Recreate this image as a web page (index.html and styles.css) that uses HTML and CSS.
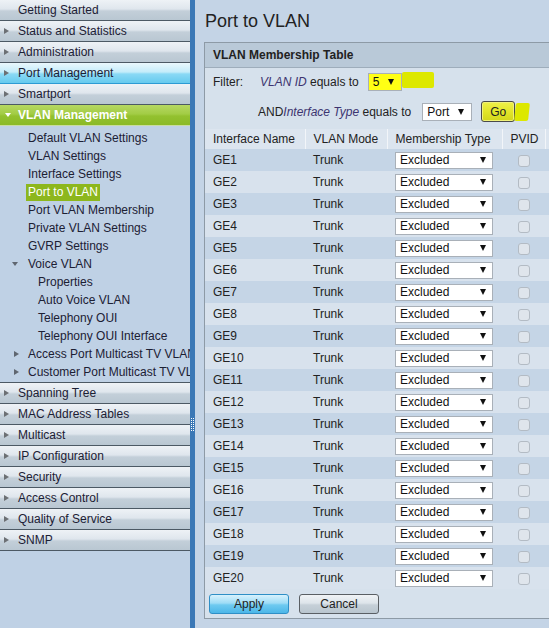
FILE: index.html
```html
<!DOCTYPE html>
<html lang="en">

<head>
    <meta charset="UTF-8">
    <meta name="viewport" content="width=device-width, initial-scale=1.0">
    <title>Port to VLAN</title>
    <link rel="stylesheet" href="styles.css">
</head>

<body>

    <div class="sidebar">
        <div class="nav-item">Getting Started</div>
        <div class="nav-item closed">Status and Statistics</div>
        <div class="nav-item closed">Administration</div>
        <div class="nav-item closed hovered">Port Management</div>
        <div class="nav-item closed">Smartport</div>
        <div class="nav-item open">VLAN Management</div>
        <ul class="sub-menu">
            <li>Default VLAN Settings</li>
            <li>VLAN Settings</li>
            <li>Interface Settings</li>
            <li><span class="current">Port to VLAN</span></li>
            <li>Port VLAN Membership</li>
            <li>Private VLAN Settings</li>
            <li>GVRP Settings</li>
            <li class="group open">Voice VLAN</li>
            <li class="level2">Properties</li>
            <li class="level2">Auto Voice VLAN</li>
            <li class="level2">Telephony OUI</li>
            <li class="level2">Telephony OUI Interface</li>
            <li class="group closed">Access Port Multicast TV VLAN</li>
            <li class="group closed">Customer Port Multicast TV VLAN</li>
        </ul>
        <div class="nav-item closed after-sub">Spanning Tree</div>
        <div class="nav-item closed">MAC Address Tables</div>
        <div class="nav-item closed">Multicast</div>
        <div class="nav-item closed">IP Configuration</div>
        <div class="nav-item closed">Security</div>
        <div class="nav-item closed">Access Control</div>
        <div class="nav-item closed">Quality of Service</div>
        <div class="nav-item closed">SNMP</div>
    </div>

    <div class="splitter"><span class="grip"></span></div>

    <div class="content">
        <h1 class="page-title">Port to VLAN</h1>

        <div class="panel">
            <div class="panel-head">VLAN Membership Table</div>

            <div class="filter">
                <div class="filter-row">
                    <span class="filter-label">Filter:</span>
                    <em>VLAN ID</em>&nbsp;equals to
                    <span class="select select-vlan">5<i class="caret"></i></span>
                    <span class="mark mark-wide"></span>
                </div>
                <div class="filter-row second">
                    <span class="filter-indent"></span>
                    AND<em>Interface Type</em>&nbsp;equals to
                    <span class="select select-type">Port<i class="caret"></i></span>
                    <button class="go-btn">Go</button>
                    <span class="mark mark-thin"></span>
                </div>
            </div>

            <table class="member-table">
                <colgroup>
                    <col style="width: 100px">
                    <col style="width: 82px">
                    <col style="width: 115px">
                    <col style="width: 43px">
                    <col>
                </colgroup>
                <thead>
                    <tr>
                        <th>Interface Name</th>
                        <th>VLAN Mode</th>
                        <th>Membership Type</th>
                        <th>PVID</th>
                        <th></th>
                    </tr>
                </thead>
                <tbody>
                    <tr><td>GE1</td><td>Trunk</td><td><span class="select select-row">Excluded<i class="caret"></i></span></td><td class="pvid"><input type="checkbox" disabled></td><td></td></tr>
                    <tr><td>GE2</td><td>Trunk</td><td><span class="select select-row">Excluded<i class="caret"></i></span></td><td class="pvid"><input type="checkbox" disabled></td><td></td></tr>
                    <tr><td>GE3</td><td>Trunk</td><td><span class="select select-row">Excluded<i class="caret"></i></span></td><td class="pvid"><input type="checkbox" disabled></td><td></td></tr>
                    <tr><td>GE4</td><td>Trunk</td><td><span class="select select-row">Excluded<i class="caret"></i></span></td><td class="pvid"><input type="checkbox" disabled></td><td></td></tr>
                    <tr><td>GE5</td><td>Trunk</td><td><span class="select select-row">Excluded<i class="caret"></i></span></td><td class="pvid"><input type="checkbox" disabled></td><td></td></tr>
                    <tr><td>GE6</td><td>Trunk</td><td><span class="select select-row">Excluded<i class="caret"></i></span></td><td class="pvid"><input type="checkbox" disabled></td><td></td></tr>
                    <tr><td>GE7</td><td>Trunk</td><td><span class="select select-row">Excluded<i class="caret"></i></span></td><td class="pvid"><input type="checkbox" disabled></td><td></td></tr>
                    <tr><td>GE8</td><td>Trunk</td><td><span class="select select-row">Excluded<i class="caret"></i></span></td><td class="pvid"><input type="checkbox" disabled></td><td></td></tr>
                    <tr><td>GE9</td><td>Trunk</td><td><span class="select select-row">Excluded<i class="caret"></i></span></td><td class="pvid"><input type="checkbox" disabled></td><td></td></tr>
                    <tr><td>GE10</td><td>Trunk</td><td><span class="select select-row">Excluded<i class="caret"></i></span></td><td class="pvid"><input type="checkbox" disabled></td><td></td></tr>
                    <tr><td>GE11</td><td>Trunk</td><td><span class="select select-row">Excluded<i class="caret"></i></span></td><td class="pvid"><input type="checkbox" disabled></td><td></td></tr>
                    <tr><td>GE12</td><td>Trunk</td><td><span class="select select-row">Excluded<i class="caret"></i></span></td><td class="pvid"><input type="checkbox" disabled></td><td></td></tr>
                    <tr><td>GE13</td><td>Trunk</td><td><span class="select select-row">Excluded<i class="caret"></i></span></td><td class="pvid"><input type="checkbox" disabled></td><td></td></tr>
                    <tr><td>GE14</td><td>Trunk</td><td><span class="select select-row">Excluded<i class="caret"></i></span></td><td class="pvid"><input type="checkbox" disabled></td><td></td></tr>
                    <tr><td>GE15</td><td>Trunk</td><td><span class="select select-row">Excluded<i class="caret"></i></span></td><td class="pvid"><input type="checkbox" disabled></td><td></td></tr>
                    <tr><td>GE16</td><td>Trunk</td><td><span class="select select-row">Excluded<i class="caret"></i></span></td><td class="pvid"><input type="checkbox" disabled></td><td></td></tr>
                    <tr><td>GE17</td><td>Trunk</td><td><span class="select select-row">Excluded<i class="caret"></i></span></td><td class="pvid"><input type="checkbox" disabled></td><td></td></tr>
                    <tr><td>GE18</td><td>Trunk</td><td><span class="select select-row">Excluded<i class="caret"></i></span></td><td class="pvid"><input type="checkbox" disabled></td><td></td></tr>
                    <tr><td>GE19</td><td>Trunk</td><td><span class="select select-row">Excluded<i class="caret"></i></span></td><td class="pvid"><input type="checkbox" disabled></td><td></td></tr>
                    <tr><td>GE20</td><td>Trunk</td><td><span class="select select-row">Excluded<i class="caret"></i></span></td><td class="pvid"><input type="checkbox" disabled></td><td></td></tr>
                </tbody>
            </table>

            <div class="actions">
                <button class="btn btn-apply">Apply</button>
                <button class="btn btn-cancel">Cancel</button>
            </div>
        </div>
    </div>

</body>

</html>
```

FILE: styles.css
```css
* {
    margin: 0;
    padding: 0;
    box-sizing: border-box;
}

body {
    font-family: "Liberation Sans", Arial, sans-serif;
    font-size: 12px;
    color: #222;
    display: flex;
    width: 549px;
    height: 628px;
    overflow: hidden;
    background-color: #c4d4e6;
}

/* left navigation */
.sidebar {
    width: 190px;
    flex: none;
    background-color: #bfd1e5;
    overflow: hidden;
}

.nav-item {
    height: 21px;
    line-height: 21px;
    padding-left: 18px;
    color: #1c2034;
    white-space: nowrap;
    background: linear-gradient(to bottom, #eef2f6 0%, #dfe6ed 45%, #c3cfd9 55%, #b9c7d2 100%);
    border-bottom: 1px solid #4c5964;
}

.nav-item.closed {
    padding-left: 4px;
}

.nav-item.closed::before {
    content: "";
    display: inline-block;
    vertical-align: middle;
    margin: -2px 9px 0 0;
    border-left: 5px solid #6c7074;
    border-top: 3px solid transparent;
    border-bottom: 3px solid transparent;
}

.nav-item.hovered {
    background: linear-gradient(to bottom, #eaf8fd 0%, #c4ecfa 45%, #8ad9f5 55%, #66caee 100%);
    border-bottom-color: #2d9bd3;
}

.nav-item.open {
    padding-left: 5px;
    color: #fff;
    font-weight: bold;
    background: linear-gradient(to bottom, #b6d862 0%, #a2cc45 45%, #93c12f 55%, #8bba27 100%);
    border-bottom: 1px solid #c9dca0;
}

.nav-item.open::before {
    content: "";
    display: inline-block;
    vertical-align: middle;
    margin: -1px 7px 0 0;
    border-top: 4px solid #fff;
    border-left: 3px solid transparent;
    border-right: 3px solid transparent;
}

.nav-item.after-sub {
    height: 22px;
    border-top: 1px solid #4c5964;
}

.sub-menu {
    list-style: none;
    padding: 3px 0 1px;
}

.sub-menu li {
    height: 18px;
    line-height: 18px;
    padding-left: 28px;
    color: #1c2034;
    white-space: nowrap;
}

.sub-menu li.level2 {
    padding-left: 38px;
}

.sub-menu li.group.open {
    padding-left: 12px;
}

.sub-menu li.group.open::before {
    content: "";
    display: inline-block;
    vertical-align: middle;
    margin: -1px 10px 0 0;
    border-top: 4px solid #5f6670;
    border-left: 3px solid transparent;
    border-right: 3px solid transparent;
}

.sub-menu li.group.closed {
    padding-left: 14px;
}

.sub-menu li.group.closed::before {
    content: "";
    display: inline-block;
    vertical-align: middle;
    margin: -2px 9px 0 0;
    border-left: 5px solid #5f6670;
    border-top: 3px solid transparent;
    border-bottom: 3px solid transparent;
}

.sub-menu .current {
    display: inline-block;
    line-height: 17px;
    margin-left: -2px;
    padding: 0 2px;
    color: #fff;
    background-color: #8db71d;
}

/* blue bar between menu and page */
.splitter {
    width: 5px;
    flex: none;
    background-color: #3b78b6;
    position: relative;
}

.grip {
    position: absolute;
    top: 418px;
    left: 1px;
    width: 3px;
    height: 13px;
    border-left: 1px dotted #fff;
    border-right: 1px dotted #fff;
}

/* page area */
.content {
    flex: 1;
    min-width: 0;
    overflow: hidden;
    padding-left: 9px;
}

.page-title {
    height: 42px;
    line-height: 42px;
    padding-left: 1px;
    font-size: 18px;
    font-weight: normal;
    color: #222;
}

.panel {
    width: 360px;
    border: 1px solid #8d9aa6;
    border-right: none;
    background-color: #d6e1ec;
}

.panel-head {
    height: 25px;
    line-height: 24px;
    padding-left: 8px;
    font-weight: bold;
    color: #222;
    background-color: #b9c9d8;
    border-bottom: 1px solid #9eadbb;
}

.filter {
    padding: 3px 0 6px 8px;
}

.filter-row {
    display: flex;
    align-items: center;
    height: 22px;
    white-space: nowrap;
}

.filter-row.second {
    height: 23px;
    margin-top: 7px;
}

.filter-label {
    width: 47px;
}

.filter-indent {
    width: 45px;
}

.filter em {
    color: #3c3470;
}

.select {
    display: inline-flex;
    align-items: center;
    justify-content: space-between;
    height: 18px;
    padding: 0 7px 0 4px;
    background-color: #fff;
    border: 1px solid #a9b0b8;
    color: #111;
}

.caret {
    display: inline-block;
    border-top: 6px solid #111;
    border-left: 3px solid transparent;
    border-right: 3px solid transparent;
}

.select-vlan {
    width: 34px;
    margin-left: 9px;
    background-color: #ffff14;
}

.select-type {
    width: 50px;
    margin-left: 11px;
}

.select-row {
    width: 98px;
    padding-right: 6px;
    height: 17px;
}

.go-btn {
    width: 34px;
    height: 21px;
    margin-left: 9px;
    font-family: inherit;
    font-size: 12px;
    color: #222;
    border: 1px solid #4a4a4a;
    border-radius: 3px;
    background: linear-gradient(to bottom, #eef04a 0%, #e2e62a 50%, #d2d61c 100%);
    box-shadow: inset 0 0 0 1px #f0f27a;
}

/* yellow marker strokes from the screenshot */
.mark {
    display: inline-block;
    background-color: #dde800;
    border-radius: 2px;
}

.mark-wide {
    width: 32px;
    height: 16px;
    margin-top: -4px;
}

.mark-thin {
    width: 14px;
    height: 18px;
    transform: skewX(-6deg);
}

.member-table {
    width: 100%;
    border-collapse: collapse;
    table-layout: fixed;
}

.member-table th {
    height: 20px;
    padding: 0 8px;
    text-align: left;
    font-weight: normal;
    color: #222;
    white-space: nowrap;
    background-color: #dce5ef;
    border-right: 1px solid #f2f5f9;
}

.member-table td {
    height: 22px;
    padding: 0 8px;
    white-space: nowrap;
}

.member-table tbody tr:nth-child(odd) {
    background-color: #c5d5e6;
}

.member-table tbody tr:nth-child(even) {
    background-color: #d8e2ed;
}

.member-table td.pvid {
    text-align: center;
    padding: 0;
}

.pvid input {
    appearance: none;
    display: inline-block;
    vertical-align: middle;
    width: 12px;
    height: 12px;
    border: 1px solid #b3bbc4;
    border-radius: 3px;
    background-color: #dfe5ec;
}

.actions {
    display: flex;
    gap: 10px;
    padding: 5px 0 4px 4px;
}

.btn {
    width: 80px;
    height: 20px;
    font-family: inherit;
    font-size: 12px;
    color: #222;
    border-radius: 3px;
    cursor: pointer;
}

.btn-apply {
    border: 1px solid #2f8fc6;
    background: linear-gradient(to bottom, #d8f2fd 0%, #9edcf6 45%, #6fcaf0 55%, #4cb6e8 100%);
}

.btn-cancel {
    border: 1px solid #5a5f64;
    background: linear-gradient(to bottom, #f0f3f6 0%, #dde4ea 45%, #c6d0d8 55%, #b9c5ce 100%);
}
```
